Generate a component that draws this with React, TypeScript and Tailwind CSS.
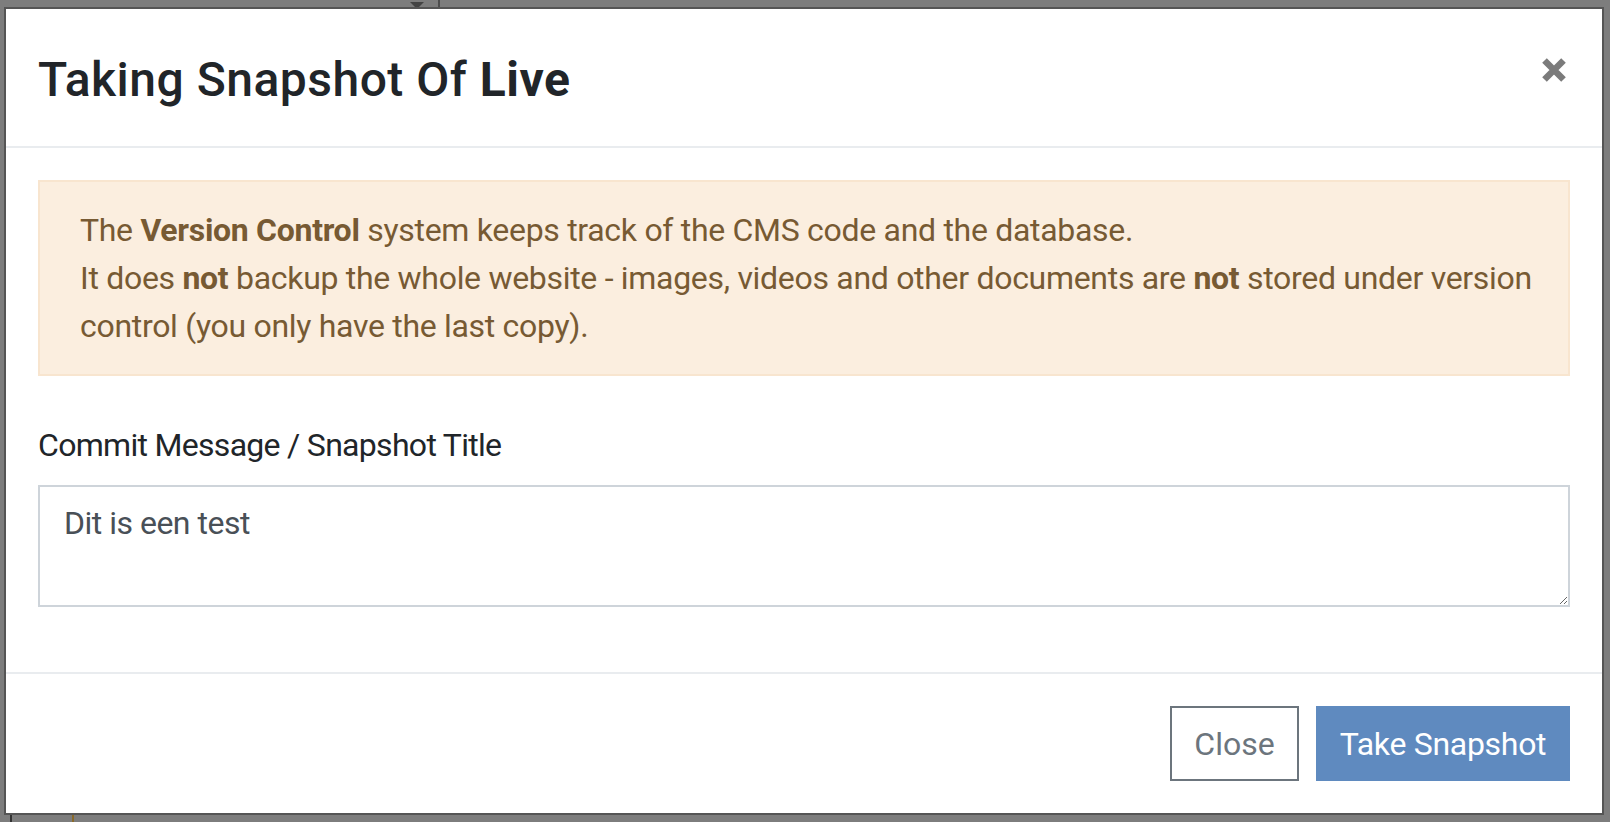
import React from 'react';

/* ── Snapshot modal (over a dimmed page) ─────────────── */
export default function App() {
    return (
        <div className="relative h-[822px] w-[1610px] overflow-hidden bg-[#7d7d7d] font-[Roboto,'Noto_Sans',sans-serif]">
            {/* ── Dimmed page behind the modal ─────────── */}
            <div className="absolute left-0 top-0 flex h-[9px] w-[440px] items-end justify-end border-r-2 border-[#4d4d4d] pr-[14px]">
                <div className="h-0 w-0 border-x-[7px] border-t-[7px] border-x-transparent border-t-[#444]" />
            </div>
            <div className="absolute bottom-0 left-0 flex h-[8px] w-full gap-[60px] pl-[10px]">
                <div className="w-[2px] bg-[#333]" />
                <div className="w-[2px] bg-[#8a6a2a]" />
            </div>

            {/* ── Modal ───────────────────────────────── */}
            <div className="relative z-10 pl-[4px] pt-[7px]">
                <div className="w-[1600px] border-2 border-[#555] bg-white">
                    {/* Header */}
                    <div className="flex h-[139px] items-start justify-between border-b-2 border-[#e9ecef] px-[32px]">
                        <h4 className="pt-[42px] text-[48px] font-medium leading-[57.6px] tracking-[0.5px] text-[#212529]">
                            Taking Snapshot Of <span className="font-bold">Live</span>
                        </h4>
                        <button className="mr-[4px] mt-[49px] h-[24px] w-[24px]">
                            <svg viewBox="0 0 24 24" className="h-[24px] w-[24px] overflow-visible">
                                <path d="M2.5 2.5 L21.5 21.5 M21.5 2.5 L2.5 21.5" stroke="#7b7b7b" strokeWidth="6.5" />
                            </svg>
                        </button>
                    </div>

                    {/* Body */}
                    <div className="px-[32px] pt-[32px] pb-[65px]">
                        <div className="border-2 border-[#f8e5cf] bg-[#fbeedf] px-[40px] py-[24px] text-[32px] leading-[48px] tracking-[-0.3px] text-[#775a33]">
                            <p>
                                The <b className="font-bold">Version Control</b> system keeps track of the CMS code and the database.
                            </p>
                            <p className="whitespace-nowrap">
                                It does <b className="font-bold">not</b> backup the whole website - images, videos and other documents are{' '}
                                <b className="font-bold">not</b> stored under version
                            </p>
                            <p>control (you only have the last copy).</p>
                        </div>

                        <label className="mt-[45px] mb-[16px] block text-[32px] leading-[48px] tracking-[-0.7px] text-[#212529]">
                            Commit Message / Snapshot Title
                        </label>
                        <textarea
                            defaultValue="Dit is een test"
                            className="block h-[122px] w-full border-2 border-[#ced4da] px-[24px] py-[12px] text-[32px] leading-[48px] tracking-[-0.5px] text-[#495057] outline-none"
                        />
                    </div>

                    {/* Footer */}
                    <div className="flex justify-end gap-[17px] border-t-2 border-[#e9ecef] px-[32px] pt-[32px] pb-[32px]">
                        <button className="h-[75px] w-[129px] border-2 border-[#6c757d] bg-white text-[32px] text-[#6c757d]">
                            Close
                        </button>
                        <button className="h-[75px] w-[254px] bg-[#5f8abf] text-[32px] tracking-[-0.3px] text-white">
                            Take Snapshot
                        </button>
                    </div>
                </div>
            </div>
        </div>
    );
}
